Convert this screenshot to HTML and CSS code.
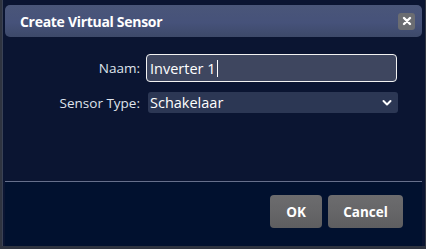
FILE: index.html
```html
<!DOCTYPE html>
<html>
<head>
<meta charset="utf-8">
<link rel="stylesheet" href="styles.css">
</head>
<body>
<div class="dialog">
  <div class="titlebar">
    <span class="title">Create Virtual Sensor</span>
    <span class="close"><svg width="10" height="10" viewBox="0 0 10 10"><path d="M2 2L8 8M8 2L2 8" stroke="#fff" stroke-width="2.4" stroke-linecap="round"/></svg></span>
  </div>
  <div class="content">
    <div class="row">
      <label class="lbl">Naam:</label>
      <div class="input">Inverter 1<span class="caret"></span></div>
    </div>
    <div class="row row2">
      <label class="lbl">Sensor Type:</label>
      <div class="select">Schakelaar<svg class="chev" width="10" height="8" viewBox="0 0 10 8"><path d="M1.5 2L5 5.5L8.5 2" stroke="#fff" stroke-width="2" fill="none" stroke-linecap="round" stroke-linejoin="round"/></svg></div>
    </div>
  </div>
  <div class="footer">
    <button class="btn ok">OK</button>
    <button class="btn cancel">Cancel</button>
  </div>
</div>
</body>
</html>
```
FILE: styles.css
```css
html, body { margin: 0; padding: 0; }
body {
  width: 426px; height: 249px; overflow: hidden;
  background: #2f3440;
  font-family: "Open Sans", "Noto Sans", sans-serif;
}
.dialog {
  width: 423px; height: 246px;
  margin-left: 2px;
  background: #0b1532;
  border-left: 1px solid #3a4256;
  box-sizing: border-box;
  display: flex; flex-direction: column;
  padding: 5px 3px 0 2px;
}
.titlebar {
  height: 32px;
  border-radius: 5px;
  background: linear-gradient(#4a5679 0%, #46527a 55%, #3d4969 100%);
  display: flex; align-items: center; justify-content: space-between;
  padding: 0 7px 0 15px;
  box-sizing: border-box;
}
.title {
  color: #fff; font-weight: bold; font-size: 14px;
  font-family: "Open Sans", "Noto Sans", sans-serif;
  letter-spacing: -0.3px;
}
.close {
  width: 17px; height: 17px; border-radius: 3px;
  background: #6b6d72;
  display: flex; align-items: center; justify-content: center;
}
.content {
  height: 145px;
  padding-top: 17px;
  box-sizing: border-box;
  border-bottom: 1px solid #66708c;
}
.row { display: flex; align-items: center; }
.row2 { margin-top: 10px; }
.lbl {
  width: 140px; text-align: right; color: #dfe3ec;
  font-size: 13.5px; padding-right: 5px; box-sizing: border-box;
}
.input {
  width: 251px; height: 28px; box-sizing: border-box;
  border: 1.5px solid #f2f2f2; border-radius: 4px;
  background: #3e465f;
  color: #fff; font-size: 14.5px;
  display: flex; align-items: center; padding-left: 3px;
  margin-left: 1px;
}
.caret { width: 1px; height: 17px; background: #fff; margin-left: 1px; }
.select {
  width: 250px; height: 21px; box-sizing: border-box;
  border-radius: 3px; background: #2c3754;
  color: #fff; font-size: 14.5px;
  display: flex; align-items: center; justify-content: space-between;
  padding: 0 6px 0 2px; margin-left: 3px;
}
.footer {
  flex: 1;
  background: #01112f;
  display: flex; justify-content: flex-end; align-items: flex-start;
  padding: 13px 19px 0 0;
  gap: 6px;
}
.btn {
  height: 33px; border: none; border-radius: 4px;
  background: linear-gradient(#6c6c6e 0%, #666668 50%, #5e5e60 100%);
  color: #fff; font-weight: bold; font-size: 13.5px;
  font-family: "Open Sans", "Noto Sans", sans-serif;
  padding: 0;
}
.ok { width: 52px; }
.cancel { width: 75px; }
```
